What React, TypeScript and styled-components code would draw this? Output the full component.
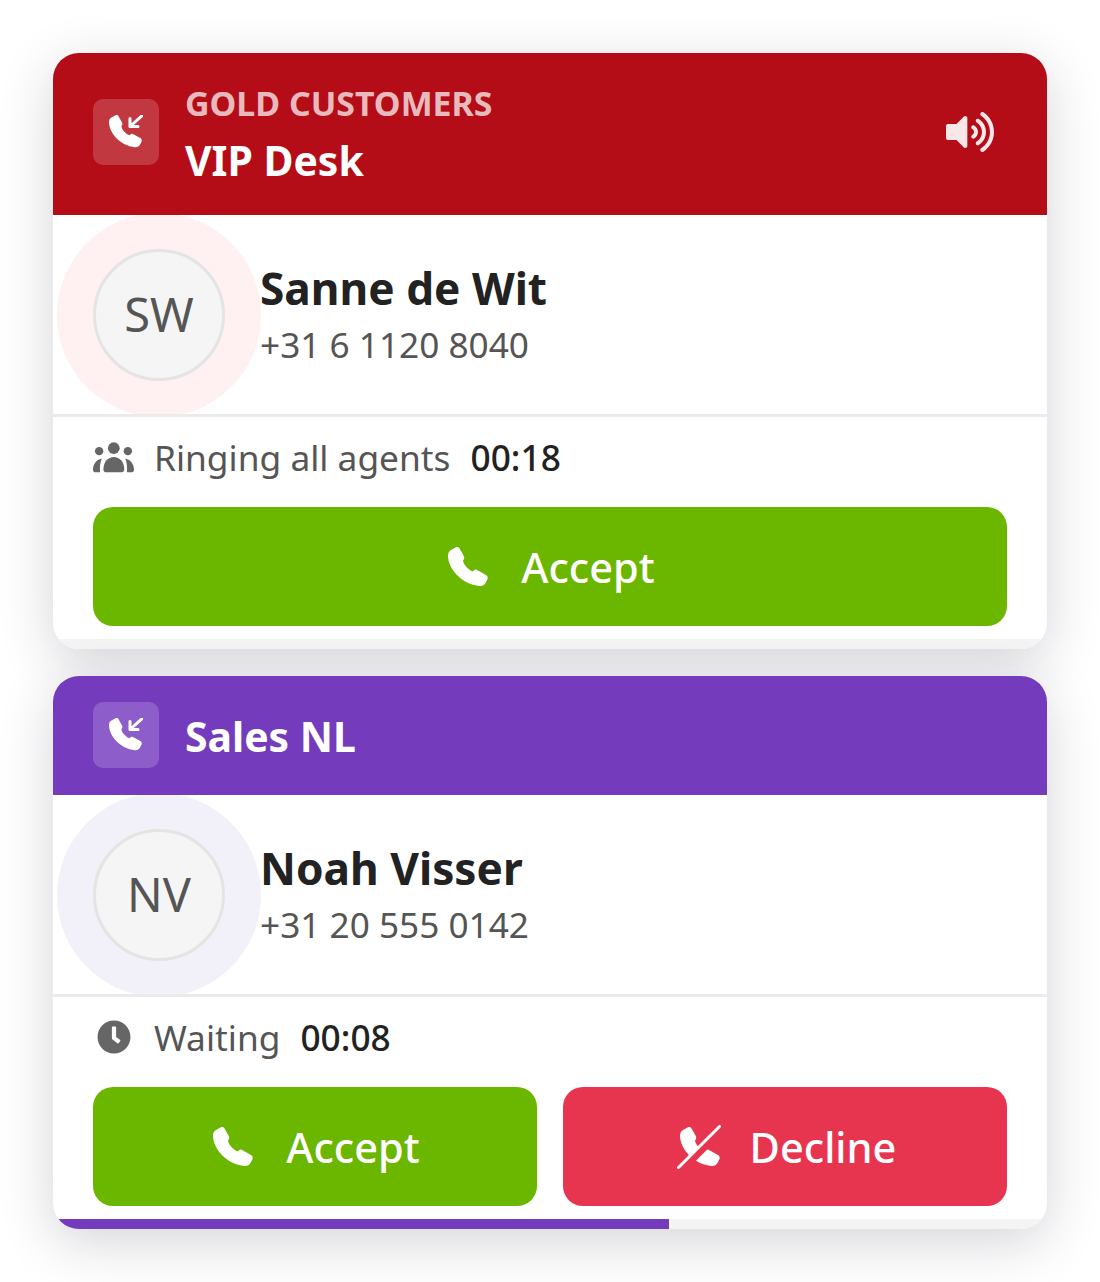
import React from 'react'
import styled, { createGlobalStyle } from 'styled-components'
import { FaClock, FaVolumeUp } from 'react-icons/fa'

const GlobalStyle = createGlobalStyle`
  html, body {
    margin: 0;
    padding: 0;
    background: #fff;
  }
  body {
    font-family: 'Noto Sans', 'Open Sans', sans-serif;
  }
`

const Page = styled.div`
  display: flex;
  flex-direction: column;
  gap: 27px;
  width: 1100px;
  height: 1282px;
  padding: 53px;
  box-sizing: border-box;
  overflow: hidden;
`

const Card = styled.section`
  display: flex;
  flex-direction: column;
  background: #fff;
  border-radius: 26px;
  overflow: hidden;
  box-shadow: 0 13px 53px rgba(30, 30, 60, 0.19);
`

const Header = styled.header<{ $color: string; $tall?: boolean }>`
  display: flex;
  align-items: center;
  gap: 26px;
  height: ${p => (p.$tall ? '162px' : '119px')};
  padding: 0 40px ${p => (p.$tall ? '4px' : '2px')};
  box-sizing: border-box;
  flex-shrink: 0;
  background: ${p => p.$color};
  color: #fff;
`

const HeaderIcon = styled.div`
  display: flex;
  align-items: center;
  justify-content: center;
  width: 66px;
  height: 66px;
  border-radius: 10px;
  background: rgba(255, 255, 255, 0.18);
  flex-shrink: 0;
`

const HeaderText = styled.div<{ $tall?: boolean }>`
  display: flex;
  flex-direction: column;
  flex: 1;
  gap: 7px;
  margin-top: ${p => (p.$tall ? '5px' : '3px')};
`

const Eyebrow = styled.div`
  font-size: 33.9px;
  line-height: 44px;
  font-weight: 700;
  color: rgba(255, 255, 255, 0.72);
`

const QueueName = styled.div`
  font-size: 40.9px;
  line-height: 56px;
  font-weight: 700;
`

const SoundIcon = styled(FaVolumeUp)`
  width: 48px;
  height: 48px;
  margin-right: 13px;
  color: rgba(255, 255, 255, 0.9);
`

const Contact = styled.div`
  display: flex;
  align-items: center;
  gap: 35px;
  height: 199px;
  padding: 0 40px;
  flex-shrink: 0;
  border-bottom: 3px solid #ebebeb;
  overflow: hidden;
`

const Avatar = styled.div<{ $halo: string }>`
  display: flex;
  align-items: center;
  justify-content: center;
  width: 126px;
  height: 125px;
  padding-bottom: 1px;
  border: 3px solid #e4e4e4;
  border-radius: 50%;
  background: #f5f5f5;
  color: #555;
  font-size: 47px;
  box-shadow: 0 0 0 36px ${p => p.$halo};
  flex-shrink: 0;
`

const ContactText = styled.div`
  display: flex;
  flex-direction: column;
  gap: 2px;
  margin-top: -3px;
`

const ContactName = styled.div`
  font-size: 44.2px;
  line-height: 60px;
  font-weight: 700;
  color: #222;
`

const ContactPhone = styled.div`
  font-size: 35.2px;
  line-height: 48px;
  color: #555;
`

const Status = styled.div`
  display: flex;
  align-items: center;
  gap: 20px;
  height: 90px;
  padding: 0 40px 10px;
  box-sizing: border-box;
  flex-shrink: 0;
  font-size: 35.3px;
  color: #555;
`

const StatusIcon = styled.span`
  display: flex;
  align-items: center;
  justify-content: center;
  width: 41px;
  color: #666;
`

const Timer = styled.span`
  font-weight: 500;
  color: #222;
`

const Actions = styled.div`
  display: flex;
  gap: 26px;
  padding: 0 40px;
`

const ActionButton = styled.button<{ $color: string }>`
  display: flex;
  flex: 1;
  align-items: center;
  justify-content: center;
  gap: 33px;
  height: 119px;
  padding: 0 0 0 3px;
  border: 0;
  border-radius: 20px;
  background: ${p => p.$color};
  color: #fff;
  font-family: inherit;
  font-size: 41.5px;
  font-weight: 500;
`

const Progress = styled.div`
  height: 10px;
  margin-top: 13px;
  background: #f4f4f5;
`

const ProgressFill = styled.div<{ $color: string }>`
  height: 100%;
  background: ${p => p.$color};
`

const DeclineGlyph = styled.svg`
  margin-right: -4px;
`

const handset =
  'M3 3 8 .3C9.500-.3 11 .3 11.700 1.700L15.800 9C16.400 10.200 16.400 11.800 15.600 12.800L15 13.600C15.500 17.500 19.500 22 24.500 24.500L26 23.300C27 22.500 28 22.400 29 23L38 28C39.500 29 40 30.500 39.500 32L37.500 36C36.500 38 34 39.300 31.500 39 14 37.500 0 22 0 8.500 0 6 1 4 3 3Z'

const PhoneIcon = () => (
  <svg width="40" height="40" viewBox="0 0 40 40" fill="currentColor">
    <path d={handset} />
  </svg>
)

const IncomingIcon = () => (
  <svg width="34" height="34" viewBox="0 0 34 34" fill="none">
    <path d={handset} fill="#fff" transform="scale(.825)" />
    <path
      d="M32.700 1 21 11.500M21 3.500v8h8"
      stroke="#fff"
      strokeWidth="3"
      strokeLinecap="round"
      strokeLinejoin="round"
    />
  </svg>
)

const DeclineIcon = () => (
  <DeclineGlyph width="44" height="44" viewBox="0 0 44 44" fill="none">
    <path d={handset} fill="#fff" transform="translate(3 2)" />
    <path d="M3 43 43 3" stroke="#e8354f" strokeWidth="8" transform="translate(1.500 1.500)" />
    <path d="M1.500 42.500 42.500 1.500" stroke="#fff" strokeWidth="3" strokeLinecap="round" />
  </DeclineGlyph>
)

const PeopleIcon = () => (
  <svg width="42" height="31" viewBox="0 0 42 31" fill="currentColor">
    <circle cx="21.300" cy="6" r="6" />
    <circle cx="6.300" cy="9" r="4.300" />
    <circle cx="35.700" cy="9" r="4.300" />
    <path d="M10.700 27.500C10.700 20 15.500 15 21.300 15S32 20 32 27.500C32 29.500 31 30.500 29.500 30.500H13C11.500 30.500 10.700 29.500 10.700 27.500Z" />
    <path d="M0 28C0 22.500 3 18 9 16.500 7.500 20 6.800 25 7.200 30.500H2C.800 30.500 0 29.500 0 28Z" />
    <path d="M42 28C42 22.500 39 18 33 16.500 34.500 20 35.200 25 34.800 30.500H40C41.200 30.500 42 29.500 42 28Z" />
  </svg>
)

interface CallCardProps {
  color: string
  halo: string
  eyebrow?: string
  queue: string
  initials: string
  name: string
  phone: string
  statusIcon: React.ReactNode
  status: string
  timer: string
  canDecline?: boolean
  progress?: number
}

const CallCard = (props: CallCardProps) => (
  <Card>
    <Header $color={props.color} $tall={!!props.eyebrow}>
      <HeaderIcon>
        <IncomingIcon />
      </HeaderIcon>
      <HeaderText $tall={!!props.eyebrow}>
        {props.eyebrow && <Eyebrow>{props.eyebrow}</Eyebrow>}
        <QueueName>{props.queue}</QueueName>
      </HeaderText>
      {props.eyebrow && <SoundIcon />}
    </Header>
    <Contact>
      <Avatar $halo={props.halo}>{props.initials}</Avatar>
      <ContactText>
        <ContactName>{props.name}</ContactName>
        <ContactPhone>{props.phone}</ContactPhone>
      </ContactText>
    </Contact>
    <Status>
      <StatusIcon>{props.statusIcon}</StatusIcon>
      <span>{props.status}</span>
      <Timer>{props.timer}</Timer>
    </Status>
    <Actions>
      <ActionButton $color="#6bb700">
        <PhoneIcon />
        Accept
      </ActionButton>
      {props.canDecline && (
        <ActionButton $color="#e8354f">
          <DeclineIcon />
          Decline
        </ActionButton>
      )}
    </Actions>
    <Progress>
      {props.progress !== undefined && (
        <ProgressFill $color={props.color} style={{ width: `${props.progress}%` }} />
      )}
    </Progress>
  </Card>
)

const App = () => (
  <Page>
    <GlobalStyle />
    <CallCard
      color="#b40d17"
      halo="#fff0f1"
      eyebrow="GOLD CUSTOMERS"
      queue="VIP Desk"
      initials="SW"
      name="Sanne de Wit"
      phone="+31 6 1120 8040"
      statusIcon={<PeopleIcon />}
      status="Ringing all agents"
      timer="00:18"
    />
    <CallCard
      color="#753bbd"
      halo="#f2f0f9"
      queue="Sales NL"
      initials="NV"
      name="Noah Visser"
      phone="+31 20 555 0142"
      statusIcon={<FaClock size={34} />}
      status="Waiting"
      timer="00:08"
      canDecline
      progress={62}
    />
  </Page>
)

export default App
